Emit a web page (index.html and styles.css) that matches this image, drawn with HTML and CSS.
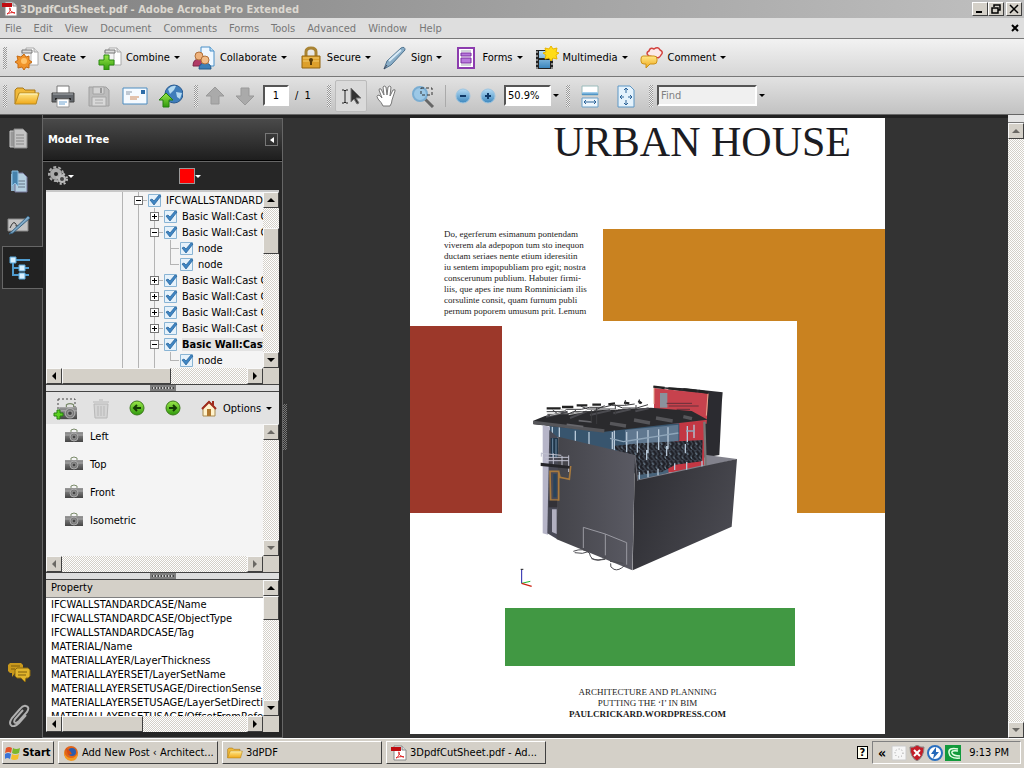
FILE: index.html
```html
<!DOCTYPE html>
<html lang="en">
	<head>
		<meta charset="utf-8">
		<title>3DpdfCutSheet.pdf - Adobe Acrobat Pro Extended</title>
		<link rel="stylesheet" href="styles.css">
	</head>
	<body>
		<!-- shared icons -->
		<svg class="defs" aria-hidden="true">
			<defs>
				<linearGradient id="gold" x2="0" y2="1"><stop offset="0" stop-color="#ffe88a"/><stop offset="1" stop-color="#f0a818"/></linearGradient>
				<linearGradient id="blue" x2="0" y2="1"><stop offset="0" stop-color="#b5dcf5"/><stop offset="1" stop-color="#3b86bd"/></linearGradient>
				<linearGradient id="grey" x2="0" y2="1"><stop offset="0" stop-color="#999"/><stop offset="1" stop-color="#444"/></linearGradient>
				<linearGradient id="green" x2="0" y2="1"><stop offset="0" stop-color="#9be84a"/><stop offset="1" stop-color="#2f9a0c"/></linearGradient>
			</defs>
			<symbol id="pdf" viewBox="0 0 16 16">
				<path d="M3 1h8l4 4v10H3z" fill="#fff" stroke="#888"/>
				<path d="M11 1v4h4" fill="#ddd" stroke="#888"/>
				<path d="M0 2h10v4H0z" fill="#c00b10"/>
				<path d="M5 13c3-2 4-5 3-6s-1 4 5 5c-3-1-6 0-8 1z" fill="none" stroke="#d22"/>
			</symbol>
			<symbol id="sheets" viewBox="0 0 24 24">
				<path d="M11 2h8l4 4v13H11z" fill="#fff" stroke="#aaa"/>
				<path d="M19 2v4h4" fill="#ddd" stroke="#aaa"/>
				<path d="M7 5h9v13H7z" fill="#f4f4f4" stroke="#bbb"/>
				<path d="M7 7V4h10v3z" fill="#ddd" stroke="#777"/>
			</symbol>
			<symbol id="camera" viewBox="0 0 20 16">
				<path d="M7 4V2q3-2 6 0v2" fill="none" stroke="#7a8a6a"/>
				<path d="M1 4h18v10H1z" fill="url(#grey)"/>
				<path d="M1 7h18" stroke="#aaa"/>
				<circle cx="10" cy="9" r="4" fill="#777" stroke="#aaa"/>
				<circle cx="10" cy="9" r="2" fill="#444" stroke="#999"/>
			</symbol>
			<symbol id="folder" viewBox="0 0 26 20">
				<path d="M1 18V4l2-2h6l2 2h10v3" fill="#f0b93a" stroke="#a9781a"/>
				<path d="M1 18L5 7h20l-3 11z" fill="url(#gold)" stroke="#b98a20"/>
				<path d="M6 8h17" stroke="#fff6c8"/>
			</symbol>
		</svg>

		<header class="titlebar">
			<svg class="ic16"><use href="#pdf"/></svg>
			<h1>3DpdfCutSheet.pdf - Adobe Acrobat Pro Extended</h1>
			<button class="win" aria-label="Minimize"><svg viewBox="0 0 12 10"><path d="M2 8h6" stroke="#000" stroke-width="2"/></svg></button>
			<button class="win" aria-label="Restore"><svg viewBox="0 0 12 10"><path d="M4 3V1h6v5H8M4 1h6" fill="none" stroke="#000" stroke-width="1.5"/><path d="M2 4h6v5H2z" fill="none" stroke="#000" stroke-width="1.5"/></svg></button>
			<button class="win last" aria-label="Close"><svg viewBox="0 0 12 10"><path d="M2 1l8 8M10 1L2 9" stroke="#000" stroke-width="1.5"/></svg></button>
		</header>

		<nav class="menubar">
			<a href="#">File</a><a href="#">Edit</a><a href="#">View</a><a href="#">Document</a><a href="#">Comments</a><a href="#">Forms</a><a href="#">Tools</a><a href="#">Advanced</a><a href="#">Window</a><a href="#">Help</a>
			<button class="closedoc" aria-label="Close document"><svg viewBox="0 0 8 8"><path d="M1 1l6 6M7 1L1 7" stroke="#000" stroke-width="2"/></svg></button>
		</nav>

		<div class="toolbar tasks">
			<span class="grip"></span>
			<button class="task">
				<svg viewBox="0 0 24 24"><use href="#sheets"/><path d="M9 8l2 3 3-1v4l3 2-3 2v4l-3-1-2 3-2-3-4 1v-4l-3-2 3-2-1-4 4 1z" fill="#f0932a" stroke="#c56a12"/><circle cx="9" cy="15" r="3" fill="#ffc36a"/></svg>
				Create<span class="arrow"></span>
			</button>
			<button class="task">
				<svg viewBox="0 0 24 24"><use href="#sheets"/><path d="M6 9h5v5h5v5h-5v5H6v-5H1v-5h5z" fill="url(#green)" stroke="#2a8a10"/></svg>
				Combine<span class="arrow"></span>
			</button>
			<button class="task">
				<svg viewBox="0 0 24 24"><path d="M9 1h9l4 4v15H9z" fill="#eef7ff" stroke="#4a90c8"/><path d="M18 1v4h4" fill="#bcdcf2" stroke="#4a90c8"/><path d="M1 20q0-7 6-7t6 7z" fill="#b03a66" stroke="#7c2246"/><circle cx="7" cy="10" r="4" fill="#eeb27c" stroke="#b0703a"/><path d="M7 23q0-6 6-6t6 6z" fill="#3c7fb8" stroke="#225a8a"/><circle cx="13" cy="14" r="4" fill="#f2bd88" stroke="#b0703a"/></svg>
				Collaborate<span class="arrow"></span>
			</button>
			<button class="task">
				<svg viewBox="0 0 24 24"><path d="M7 11V6q0-4 5-4t5 4v5" fill="none" stroke="#a98434" stroke-width="3"/><path d="M3 10h18v12H3z" fill="#dda02c" stroke="#93640e"/><path d="M4 12h16M4 15h16" stroke="#f2cb6c"/><circle cx="12" cy="14" r="2" fill="#5a3c08"/><path d="M12 14v5" stroke="#5a3c08" stroke-width="2"/></svg>
				Secure<span class="arrow"></span>
			</button>
			<button class="task">
				<svg viewBox="0 0 24 24"><path d="M1 23l3-8L18 2q4-2 4 2L8 19z" fill="#8aaec8" stroke="#4e728e"/><path d="M6 15L18 4" stroke="#d8eaf6" stroke-width="2"/><path d="M1 23l3-4" fill="none" stroke="#445"/></svg>
				Sign<span class="arrow"></span>
			</button>
			<button class="task">
				<svg viewBox="0 0 24 24"><path d="M4 2h16v20H4z" fill="#fff" stroke="#8c3cae" stroke-width="2"/><path d="M7 5h10M7 19h10" stroke="#a5a5b5"/><path d="M7 7h10v3H7zM7 12h10v5H7z" fill="#b878dc" stroke="#7a2ea0"/></svg>
				Forms<span class="arrow"></span>
			</button>
			<button class="task">
				<svg viewBox="0 0 24 24"><path d="M1 4h17v19H1z" fill="#222"/><path d="M4 5h11v7H4zM4 14h11v8H4z" fill="url(#blue)"/><path d="M2 5v18M17 5v18" stroke="#eee" stroke-dasharray="2 2"/><path d="M16 0l2 3 4-1-1 4 3 1-3 2 1 4-4-1-2 3-2-3-4 1 1-4-3-2 3-1-1-4 4 1z" fill="#ffdc18" stroke="#e8b400"/></svg>
				Multimedia<span class="arrow"></span>
			</button>
			<button class="task">
				<svg viewBox="0 0 24 24"><path d="M9 10Q5 7 9 5q1-4 5-2 4-3 6 1 4 2 1 5-2 4-5 2l-1 4-2-4z" fill="#fbeaea" stroke="#d2423e" stroke-width="1.5"/><path d="M3 10h11q3 0 3 3v2q0 3-3 3h-4l-4 4v-4H4q-3 0-3-3v-2q0-3 2-3z" fill="url(#gold)" stroke="#cc9218"/></svg>
				Comment<span class="arrow"></span>
			</button>
		</div>

		<div class="toolbar files">
			<span class="grip"></span>
			<button class="tool" aria-label="Open"><svg class="ic26"><use href="#folder"/></svg></button>
			<button class="tool" aria-label="Print"><svg viewBox="0 0 24 24"><path d="M6 2h12v8H6z" fill="#fff" stroke="#777"/><path d="M1 9h22v9H1z" fill="#62666b" stroke="#444"/><path d="M2 10h20" stroke="#a8acb0"/><path d="M4 14h16v2H4z" fill="#222"/><path d="M6 15h12v8H6z" fill="#fff" stroke="#999"/><path d="M8 18h8M8 20h6" stroke="#6fa3d0"/></svg></button>
			<button class="tool" aria-label="Save" disabled><svg viewBox="0 0 24 24"><path d="M2 3h17l3 3v16H2z" fill="#bcbcbc" stroke="#a0a0a0"/><path d="M6 3h11v7H6z" fill="#d4d4d4" stroke="#a4a4a4"/><path d="M13 4h2v5h-2z" fill="#999"/><path d="M5 13h14v9H5z" fill="#d8d8d8" stroke="#a6a6a6"/><path d="M8 16h8M8 19h8" stroke="#aaa"/></svg></button>
			<button class="tool" aria-label="Email"><svg class="ic26" viewBox="0 0 26 20"><path d="M1 2h24v16H1z" fill="#f5faff" stroke="#4d8cc0"/><path d="M19 4h4v4h-4z" fill="#2d6ca8"/><path d="M4 6h6M4 8h4" stroke="#8a98a8"/><path d="M8 11h9M8 13h7" stroke="#d08a5a"/></svg></button>
			<button class="tool" aria-label="Upload"><svg viewBox="0 0 24 24"><circle cx="15" cy="10" r="9" fill="#3f7dba" stroke="#285a90"/><path d="M9 5q4-4 8-3l-2 4-4 4zM17 8l6 1-2 6-3-2z" fill="#b4daf0"/><path d="M7 9l7 7h-4v7H4v-7H0z" fill="url(#green)" stroke="#258010"/></svg></button>
			<span class="grip"></span>
			<button class="tool small" aria-label="Previous page" disabled><svg viewBox="0 0 24 24"><path d="M12 3l9 9h-5v8H8v-8H3z" fill="#aaa" stroke="#999"/></svg></button>
			<button class="tool small" aria-label="Next page" disabled><svg viewBox="0 0 24 24"><path d="M12 21l9-9h-5V4H8v8H3z" fill="#aaa" stroke="#999"/></svg></button>
			<input class="box pageno" type="text" value="1" aria-label="Page number">
			<span class="pages">/&nbsp; 1</span>
			<span class="grip"></span>
			<button class="tool on" aria-label="Select"><svg viewBox="0 0 24 24"><path d="M3 6h2l1 1 1-1h2M6 7v11M3 19h2l1-1 1 1h2" fill="none" stroke="#222"/><path d="M12 4v14l3-3 3 5 2-1-3-5h5z" fill="#333" stroke="#777"/></svg></button>
			<button class="tool" aria-label="Hand"><svg viewBox="0 0 24 24"><path d="M8 22q-1-3-5-7-2-3 0-4 2 0 4 3L4 6q0-2 2-1l3 6-1-8q1-2 3 0l1 8 1-8q2-2 3 0l-1 9 3-6q3-1 2 1l-3 9q0 3-2 6z" fill="#fff" stroke="#777"/></svg></button>
			<button class="tool" aria-label="Marquee zoom"><svg viewBox="0 0 24 24"><path d="M14 15l8 8" stroke="#666" stroke-width="3"/><circle cx="9" cy="10" r="7" fill="#9cc8e6" stroke="#7aadd2" stroke-width="2"/><path d="M10 4h11v7H10z" fill="none" stroke="#333" stroke-dasharray="3 2"/></svg></button>
			<span class="sep"></span>
			<button class="tool zoom" aria-label="Zoom out"><svg viewBox="0 0 16 16"><circle cx="8" cy="8" r="7" fill="url(#blue)" stroke="#9cc4e0"/><path d="M5 8h6" stroke="#103a68" stroke-width="2"/></svg></button>
			<button class="tool zoom" aria-label="Zoom in"><svg viewBox="0 0 16 16"><circle cx="8" cy="8" r="7" fill="url(#blue)" stroke="#9cc4e0"/><path d="M5 8h6M8 5v6" stroke="#103a68" stroke-width="2"/></svg></button>
			<input class="box percent" type="text" value="50.9%" aria-label="Zoom">
			<button class="drop" aria-label="Zoom levels"><span class="arrow"></span></button>
			<span class="grip"></span>
			<button class="tool" aria-label="Fit width"><svg viewBox="0 0 24 24"><path d="M4 2h16v9H4z" fill="#fff" stroke="#9bb"/><path d="M4 8h16v3H4z" fill="url(#blue)"/><path d="M4 14h16v9H4z" fill="#eef6fc" stroke="#6aa0c8"/><path d="M6 18h12M8 16l-2 2 2 2M16 16l2 2-2 2" fill="none" stroke="#2a6298"/></svg></button>
			<button class="tool" aria-label="Fit page"><svg viewBox="0 0 24 24"><path d="M4 2h12l4 4v17H4z" fill="#e4f2fc" stroke="#5c96c4"/><path d="M12 4v5M10 6l2-2 2 2M12 21v-5M10 19l2 2 2-2M6 13h4M8 11l-2 2 2 2M18 13h-4M16 11l2 2-2 2" fill="none" stroke="#2a6298"/></svg></button>
			<span class="grip"></span>
			<input class="box find" type="text" placeholder="Find" aria-label="Find">
			<button class="drop" aria-label="Find options"><span class="arrow"></span></button>
		</div>

		<main>
			<nav class="rail">
				<button aria-label="Pages"><svg viewBox="0 0 24 24"><path d="M3 4h11v16H3z" fill="#999" stroke="#ccc"/><path d="M7 2h9l4 4v15H7z" fill="#c4c4c4" stroke="#888"/><path d="M9 8h8M9 11h8M9 14h8M9 17h8" stroke="#888"/></svg></button>
				<button aria-label="Bookmarks"><svg viewBox="0 0 24 24"><path d="M4 4h10v17H4z" fill="#8fb0c8"/><path d="M8 3h8l4 4v15H8z" fill="#b4cfe0" stroke="#779"/><path d="M11 11h7M11 14h7M11 17h7" stroke="#678"/><path d="M5 1h6v15l-3-3-3 3z" fill="#4682ac" stroke="#8cc0e2"/></svg></button>
				<button aria-label="Signatures"><svg viewBox="0 0 24 24"><path d="M1 6h20v12H1z" fill="#c4c4c4" stroke="#888"/><path d="M3 15q3-7 5-5t1 3 6-2" fill="none" stroke="#333"/><path d="M2 21L21 3l2 2L6 20z" fill="#80aac8" stroke="#3b6482"/></svg></button>
				<button class="current" aria-label="Model Tree"><svg viewBox="0 0 24 24"><path d="M5 4h17M5 4v15h16M5 12h16" fill="none" stroke="#4f9cd0" stroke-width="2"/><path d="M2 1h6v6H2zM11 9h6v6h-6zM11 17h6v6h-6z" fill="#d8f0ff" stroke="#58a8dc"/></svg></button>
				<span class="fill"></span>
				<button aria-label="Comments"><svg viewBox="0 0 24 24"><path d="M3 3h11l2 2v6l-2 2H8l-3 4v-4H3l-2-2V5z" fill="#c8981c"/><path d="M10 8h11l2 2v6l-2 2h-2l-1 4-4-4h-4l-2-2v-6z" fill="#e0b42c" stroke="#8c6a10"/><path d="M4 6h9M4 9h4M11 12h9M11 15h8" stroke="#7c5c0c"/></svg></button>
				<button aria-label="Attachments"><svg viewBox="0 0 24 24"><path d="M16 7l-8 9q-2 4 1 4l3-2 8-9q3-5-1-6-3-1-6 3l-8 9q-4 6 0 8 3 1 7-3l7-8" fill="none" stroke="#b0b0b0" stroke-width="2"/></svg></button>
			</nav>

			<aside class="panel">
				<div class="panelhead"><h2>Model Tree</h2><button aria-label="Collapse"><svg viewBox="0 0 8 8"><path d="M6 1v6L2 4z" fill="#fff"/></svg></button></div>
				<div class="paneltools">
					<button aria-label="Tree options"><svg viewBox="0 0 20 20"><circle cx="8" cy="8" r="4" fill="none" stroke="#aaa" stroke-width="4"/><circle cx="8" cy="8" r="7" fill="none" stroke="#aaa" stroke-width="2" stroke-dasharray="3 2"/><circle cx="14" cy="13" r="3" fill="#444" stroke="#bbb" stroke-width="2"/><circle cx="14" cy="13" r="5" fill="none" stroke="#bbb" stroke-width="2" stroke-dasharray="2 2"/></svg><span class="arrow light"></span></button>
					<button aria-label="Colour"><span class="swatch"></span><span class="arrow light"></span></button>
				</div>

				<div class="scroller treebox">
					<ul class="tree">
						<li><i class="line"></i><i class="node"><button aria-label="Collapse"></button></i><label><input type="checkbox" checked>IFCWALLSTANDARDCASE</label></li>
						<li><i class="line"></i><i class="line"></i><i class="node"><button class="plus" aria-label="Expand"></button></i><label><input type="checkbox" checked>Basic Wall:Cast Concrete</label></li>
						<li><i class="line"></i><i class="line"></i><i class="node"><button aria-label="Collapse"></button></i><label><input type="checkbox" checked>Basic Wall:Cast Concrete</label></li>
						<li><i class="line"></i><i class="line"></i><i class="line"></i><i class="node"></i><label><input type="checkbox" checked>node</label></li>
						<li><i class="line"></i><i class="line"></i><i class="line"></i><i class="node end"></i><label><input type="checkbox" checked>node</label></li>
						<li><i class="line"></i><i class="line"></i><i class="node"><button class="plus" aria-label="Expand"></button></i><label><input type="checkbox" checked>Basic Wall:Cast Concrete</label></li>
						<li><i class="line"></i><i class="line"></i><i class="node"><button class="plus" aria-label="Expand"></button></i><label><input type="checkbox" checked>Basic Wall:Cast Concrete</label></li>
						<li><i class="line"></i><i class="line"></i><i class="node"><button class="plus" aria-label="Expand"></button></i><label><input type="checkbox" checked>Basic Wall:Cast Concrete</label></li>
						<li><i class="line"></i><i class="line"></i><i class="node"><button class="plus" aria-label="Expand"></button></i><label><input type="checkbox" checked>Basic Wall:Cast Concrete</label></li>
						<li><i class="line"></i><i class="line"></i><i class="node"><button aria-label="Collapse"></button></i><label class="picked"><input type="checkbox" checked><b>Basic Wall:Cast Concrete</b></label></li>
						<li><i class="line"></i><i class="line"></i><i class="line"></i><i class="node end"></i><label><input type="checkbox" checked>node</label></li>
					</ul>
					<div class="vbar"><button class="up" aria-label="Scroll up"></button><span class="thumb tall"></span><button class="down" aria-label="Scroll down"></button></div>
					<div class="hbar"><button class="left" aria-label="Scroll left"></button><span class="thumb wide"></span><button class="right" aria-label="Scroll right"></button></div>
				</div>
				<div class="splitter"><span></span></div>

				<div class="viewtools">
					<button aria-label="New view"><svg viewBox="0 0 24 24"><path d="M5 3h17v16H5z" fill="none" stroke="#444" stroke-dasharray="2 2"/><svg x="5" y="4" width="17" height="14"><use href="#camera"/></svg><path d="M4 14h3v3h3v3H7v3H4v-3H1v-3h3z" fill="#5cd020" stroke="#258010"/></svg></button>
					<button aria-label="Delete view" disabled><svg viewBox="0 0 24 24"><path d="M5 8h14l-1 14H6zM4 6h16M10 4h4M9 10v10M12 10v10M15 10v10" fill="#d4d4d4" stroke="#b8b8b8"/></svg></button>
					<button aria-label="Previous view"><svg viewBox="0 0 24 24"><circle cx="12" cy="12" r="7" fill="url(#green)" stroke="#3c7a1c"/><path d="M16 12H9M12 9l-3 3 3 3" fill="none" stroke="#143c04" stroke-width="2"/></svg></button>
					<button aria-label="Next view"><svg viewBox="0 0 24 24"><circle cx="12" cy="12" r="7" fill="url(#green)" stroke="#3c7a1c"/><path d="M8 12h7M12 9l3 3-3 3" fill="none" stroke="#143c04" stroke-width="2"/></svg></button>
					<button aria-label="Default view"><svg viewBox="0 0 24 24"><path d="M6 11v9h12v-9l-6-6z" fill="#fff3cc" stroke="#a88a50"/><path d="M10 13h4v7h-4z" fill="#b07830"/><path d="M5 13l7-7 7 7M16 5v4" fill="none" stroke="#a02c20" stroke-width="2"/></svg></button>
					<button class="options">Options<span class="arrow"></span></button>
				</div>
				<div class="scroller viewbox">
					<ul class="views">
						<li><svg><use href="#camera"/></svg>Left</li>
						<li><svg><use href="#camera"/></svg>Top</li>
						<li><svg><use href="#camera"/></svg>Front</li>
						<li><svg><use href="#camera"/></svg>Isometric</li>
					</ul>
					<div class="vbar"><button class="up" aria-label="Scroll up" disabled></button><button class="down" aria-label="Scroll down" disabled></button></div>
					<div class="hbar"><button class="left" aria-label="Scroll left" disabled></button><button class="right" aria-label="Scroll right" disabled></button></div>
				</div>
				<div class="splitter"><span></span></div>

				<div class="scroller propbox">
					<div class="props">
						<table>
							<tr><th>Property</th></tr>
							<tr><td>IFCWALLSTANDARDCASE/Name</td></tr>
							<tr><td>IFCWALLSTANDARDCASE/ObjectType</td></tr>
							<tr><td>IFCWALLSTANDARDCASE/Tag</td></tr>
							<tr><td>MATERIAL/Name</td></tr>
							<tr><td>MATERIALLAYER/LayerThickness</td></tr>
							<tr><td>MATERIALLAYERSET/LayerSetName</td></tr>
							<tr><td>MATERIALLAYERSETUSAGE/DirectionSense</td></tr>
							<tr><td>MATERIALLAYERSETUSAGE/LayerSetDirection</td></tr>
							<tr><td>MATERIALLAYERSETUSAGE/OffsetFromReferenceLine</td></tr>
						</table>
					</div>
					<div class="vbar"><button class="up" aria-label="Scroll up"></button><span class="thumb tall"></span><button class="down" aria-label="Scroll down"></button></div>
					<div class="hbar"><button class="left" aria-label="Scroll left"></button><span class="thumb mid"></span><button class="right" aria-label="Scroll right"></button></div>
				</div>
			</aside>

			<div class="divider"><span></span></div>

			<section class="document">
				<article class="sheet">
					<h2>URBAN HOUSE</h2>
					<p class="intro">Do, egerferum esimanum pontendam<br>viverem ala adepopon tum sto inequon<br>ductam seriaes nente etium ideresitin<br>iu sentem impopubliam pro egit; nostra<br>conscerunum publium. Habuter firmi-<br>liis, que apes ine num Romniniciam ilis<br>corsulinte consit, quam furnum publi<br>pernum poporem umusum prit. Lemum</p>
					<div class="orange"></div>
					<div class="orange side"></div>
					<div class="red"></div>
					<svg class="house" viewBox="-24 -147 885 861" role="img" aria-label="House model">
						<defs>
							<linearGradient id="wall"><stop offset="0" stop-color="#44444a"/><stop offset="1" stop-color="#5a5a63"/></linearGradient>
							<linearGradient id="wall2" x2="1" y2="0.4"><stop offset="0" stop-color="#2c2c31"/><stop offset="1" stop-color="#48484f"/></linearGradient>
							<pattern id="braces" width="26" height="30" patternUnits="userSpaceOnUse"><rect width="26" height="30" fill="#3c434e"/><path d="M0 0l8 12-6 8 10 10M14 2l8 10-6 6 8 12" stroke="#1f2026" stroke-width="6" fill="none"/><path d="M10 8l5 7M22 20l4 6" stroke="#6d8292" stroke-width="3"/></pattern>
						</defs>
						<!-- tower at the back -->
						<path d="M428 50l100 5 110 12-2 24-8 164-48 8-8-190z" fill="#2b2b30"/>
						<path d="M432 54l163 17-5 90H432z" fill="#c7424d"/>
						<path d="M432 54v48M594 71l-5 66" stroke="#e8a890" stroke-width="3"/>
						<path d="M430 50l34 4M475 55l36 3M520 58l40 5M566 63l28 5" stroke="#222" stroke-width="7"/>
						<path d="M450 69h22v44h-22z" fill="#8a929c"/>
						<path d="M470 100h76M476 108h90M500 118h40" stroke="#66303a" stroke-width="3"/>
						<!-- glass front and the red room behind it -->
						<path d="M505 160l78-8v142l-120 16z" fill="#c33743"/>
						<path d="M118 168l390-8v52l-200 34-190-50z" fill="#38556e"/>
						<path d="M345 180l160-16v48l-160 25z" fill="#607890"/>
						<path d="M378 250l90-18 8 78-92 24z" fill="#48637a"/>
						<path d="M310 228l78-8 190-10-2 64-80 10-40 22-78 10z" fill="url(#braces)"/>
						<path d="M585 254l96 13-98 25z" fill="#82828c"/>
						<path d="M380 330l203-46v10l-200 44z" fill="#80808a"/>
						<path d="M127 170v30M148 172v34M196 182v35M237 186v38M307 186v52M313 180v64M350 186v60M382 184v64M414 180v70M446 178v62M474 172v66M532 168v48M552 164v40M388 306v22M414 302v20M444 296v20M494 280v20M530 276v24M576 272v20M410 240v30M470 228v30M526 222v28" stroke="#b7c8d8" stroke-width="4"/>
						<path d="M300 205l40 10 50-8 50-8 65-10M528 183h26" stroke="#8fa6ba" stroke-width="4" fill="none"/>
						<path d="M583 155l4 136" stroke="#777" stroke-width="7"/>
						<!-- flat roof -->
						<path d="M70 152l35-14 158-17 160-8 122 10 48 26-170 20-140 16-213-22z" fill="#2a2a2d"/>
						<path d="M70 157l213 26M300 160l48 8M372 150l48 9M438 144l50 9M520 140l26 6" stroke="#56565a" stroke-width="10"/>
						<path d="M170 163l50 7M206 152l40 4" stroke="#67676c" stroke-width="5"/>
						<path d="M108 140l65-15M180 144l50-20M240 135l62-14M310 130l52-12M376 124l40-9" stroke="#4b4b50" stroke-width="6"/>
						<!-- trusses over the roof -->
						<path d="M110 115h42M156 111h34M200 106h32M247 104h26M295 103l20-3M342 98l16 2M385 93l10 7" stroke="#222" stroke-width="7"/>
						<path d="M110 125h50l10-7h44l24-6h42l24-6h40l30-4M112 133h60l18-8h60l12-8h56M128 120l16 12h40l14-12M212 108l20 9h30l22-10M318 106l20 8h42l34-10M346 90v14M388 88v14M244 120v38M260 112v50M316 104v30M378 105v16" stroke="#3b3b3e" stroke-width="3" fill="none"/>
						<path d="M120 136l32-6M176 134l42-8M300 118h24M150 118l14 4" stroke="#bbb" stroke-width="3"/>
						<!-- left edge, balcony and windows -->
						<path d="M98 166l22 4-6 324-16-4z" fill="#b6b5c8"/>
						<path d="M118 180l28 25-4 303-30-18z" fill="#494a56"/>
						<path d="M122 204h22v60h-22z" fill="#20364a"/>
						<path d="M128 205v56M138 207v56" stroke="#6f8ba5" stroke-width="3"/>
						<path d="M145 200l230 55-8 346-227-93z" fill="url(#wall)"/>
						<path d="M94 250l60 6M106 262h70M108 272h68M94 248v12M130 250v34M156 258v32M176 256v50" stroke="#c0c1cf" stroke-width="3"/>
						<path d="M92 278l88 10v8l-88-8z" fill="#252529"/>
						<path d="M120 304h26v86h-24zM146 304l4 18 28 6 4-40" stroke="#a87a3e" stroke-width="5" fill="none"/>
						<path d="M130 312h10v70h-10z" fill="#28435c"/>
						<path d="M116 392h26v20h-26z" fill="#333238"/>
						<path d="M126 418h14v74l-14-6z" fill="#b1b0c0"/>
						<!-- right wall -->
						<path d="M375 255l10 76 296-64-16 203-297 131z" fill="url(#wall2)"/>
						<path d="M375 255l8 78" stroke="#6a6a72" stroke-width="3" fill="none"/>
						<path d="M220 534v-62l66 20v64M286 492l64 26v66" stroke="#9a9aa2" stroke-width="3" fill="none"/>
						<path d="M190 544q30-12 48 5M194 548q24 6 44-4M238 548q4 24 26 22t22-10M244 566q20 8 42 2M302 580q-4 12 10 18t32-12M300 574l40 6" stroke="#4b4b50" stroke-width="3" fill="none"/>
						<!-- axes -->
						<path d="M35 598v42" stroke="#22a" stroke-width="3"/>
						<path d="M35 640l26-6" stroke="#2b3" stroke-width="3"/>
						<path d="M35 640l30 9" stroke="#c21" stroke-width="4"/>
						<path d="M32 598h8" stroke="#222" stroke-width="3"/>
					</svg>
					<div class="green"></div>
					<footer>ARCHITECTURE AND PLANNING<br>PUTTING THE ‘I’ IN BIM<br><b>PAULCRICKARD.WORDPRESS.COM</b></footer>
				</article>
			</section>
			<div class="vbar docbar"><span class="split"></span><button class="up" aria-label="Scroll up" disabled></button><button class="down" aria-label="Scroll down" disabled></button></div>
		</main>

		<footer class="taskbar">
			<button class="start"><svg viewBox="0 0 16 16"><path d="M1 3q3-2 6 0L6 8Q4 6 0 8z" fill="#e4552a"/><path d="M8 3q3 2 7 0l-1 5q-4 2-7 0z" fill="#7ab82c"/><path d="M0 9q3-2 6 0l-1 5q-3-2-5 0z" fill="#3a74d8"/><path d="M7 9q3 2 7 0l-1 5q-4 2-7 0z" fill="#f4c02a"/></svg><b>Start</b></button>
			<button class="app"><svg viewBox="0 0 16 16"><circle cx="8" cy="8" r="7" fill="#e0641a"/><circle cx="9" cy="7" r="4" fill="#2c5cae"/><path d="M1 5q1 8 7 8 5 0 7-6 0 9-7 9Q0 15 1 5z" fill="#f49a20"/><path d="M3 3l4 3 2 3-4 1z" fill="#d64c12"/></svg><span>Add New Post ‹ Architect...</span></button>
			<button class="app"><svg viewBox="0 0 26 20"><use href="#folder"/></svg><span>3dPDF</span></button>
			<button class="app"><svg><use href="#pdf"/></svg><span>3DpdfCutSheet.pdf - Ad...</span></button>
			<span class="fill"></span>
			<button class="help" aria-label="Help">?</button>
			<div class="tray">
				<span class="more">«</span>
				<svg viewBox="0 0 16 16"><path d="M1 1h14v14H1z" fill="#f6f6f6" stroke="#ccc"/><circle cx="8" cy="8" r="4" fill="none" stroke="#999" stroke-dasharray="1 2"/></svg>
				<svg viewBox="0 0 16 16"><path d="M8 0q4 3 7 2 0 10-7 14Q1 12 1 2q4 1 7-2z" fill="#c41d28" stroke="#888"/><path d="M5 5l6 6M11 5l-6 6" stroke="#fff" stroke-width="2"/></svg>
				<svg viewBox="0 0 16 16"><circle cx="8" cy="8" r="7" fill="#fff" stroke="#2a70c0" stroke-width="2"/><path d="M9 2L4 9h3l-1 5 6-7H9z" fill="#2468b8"/></svg>
				<svg viewBox="0 0 16 16"><path d="M0 0h16v16H0z" fill="#129a3c"/><path d="M13 4Q3 2 4 8t11 5M13 6Q6 5 7 8t8 3" fill="none" stroke="#e4ffe4" stroke-width="1.5"/></svg>
				<time>9:13 PM</time>
			</div>
		</footer>
	</body>
</html>
```
FILE: styles.css
```css
*{
	box-sizing: border-box;
}
body{
	margin: 0;
	height: 100vh;
	display: flex;
	flex-direction: column;
	overflow: hidden;
	background-color: #333333;
	font-family: "DejaVu Sans Condensed", "Liberation Sans", sans-serif;
	font-size: 11px;
	color: black;
}
a{
	text-decoration: none;
	color: inherit;
}
h1, h2, ul, p{
	margin: 0;
	padding: 0;
	font-size: inherit;
}
ul{
	list-style: none;
}
button{
	font: inherit;
	color: inherit;
	margin: 0;
	padding: 0;
	border: none;
	background: none;
	display: flex;
	align-items: center;
	justify-content: center;
	flex: none;
}
svg{
	flex: none;
}
.defs{
	position: absolute;
	width: 0;
	height: 0;
}
.fill{
	flex: 1;
}
.ic16{
	width: 16px;
	height: 16px;
}

/* small drop-down triangle */
.arrow{
	flex: none;
	border: 3px solid transparent;
	border-top-color: black;
	border-bottom: none;
}
.arrow.light{
	border-top-color: white;
}

/* title and menu */
.titlebar{
	flex: none;
	height: 18px;
	padding: 0 2px;
	display: flex;
	align-items: center;
	background: linear-gradient(to right, #808080, #c0c0c0);
	color: #dcd8d0;
}
.titlebar h1{
	flex: 1;
	padding-left: 2px;
}
.win{
	width: 16px;
	height: 14px;
	background-color: #d4d0c8;
	border: 1px solid;
	border-color: white #404040 #404040 white;
}
.win.last{
	margin-left: 2px;
}
.win svg{
	width: 12px;
	height: 10px;
}
.menubar{
	flex: none;
	height: 20px;
	padding: 0 5px;
	display: flex;
	align-items: center;
	gap: 12px;
	background-color: #dedede;
	color: #777777;
}
.closedoc{
	margin-left: auto;
}
.closedoc svg{
	width: 8px;
	height: 8px;
}

/* toolbars */
.toolbar{
	flex: none;
	height: 38px;
	display: flex;
	align-items: center;
	border-top: 1px solid #777777;
	background: linear-gradient(#f2f2f2, #d6d6d6);
	padding-left: 3px;
}
.toolbar.files{
	background: linear-gradient(#e2e2e2, #c2c2c2);
}
.grip{
	flex: none;
	width: 4px;
	height: 22px;
	background: repeating-conic-gradient(#999999 0 25%, #eeeeee 0 50%) 0 0 / 2px 2px;
}
.tasks .grip{
	margin-right: 8px;
}
.task{
	margin-right: 12px;
	gap: 4px;
}
.task svg, .tool svg{
	width: 24px;
	height: 24px;
}
.tool{
	width: 36px;
	height: 32px;
}
.files .grip{
	margin: 0 2px 0 5px;
}
.files .grip:first-child{
	margin-left: 0;
}
.tool svg.ic26{
	width: 26px;
	height: 20px;
}
.tool.small{
	width: 30px;
}
.tool.on{
	width: 32px;
	margin: 0 2px;
	background-color: #dadada;
	border: 1px solid #bbbbbb;
	border-radius: 2px;
}
.tool.zoom{
	width: 25px;
}
.tool.zoom svg{
	width: 16px;
	height: 16px;
}
.box{
	font: inherit;
	height: 21px;
	margin: 0;
	padding: 0 4px;
	border: 2px solid;
	border-color: #555555 #ffffff #ffffff #555555;
	background-color: white;
}
.pageno{
	width: 26px;
	margin-left: 3px;
	text-align: center;
}
.pages{
	width: 33px;
	padding-left: 6px;
}
.sep{
	width: 1px;
	height: 22px;
	margin: 0 4px;
	background-color: #aaaaaa;
}
.percent{
	width: 47px;
	margin-left: 4px;
	padding: 0 2px;
}
.drop{
	width: 10px;
	height: 20px;
}
.find{
	width: 100px;
	margin-left: 2px;
	padding: 0 2px;
	background-color: #f0f0f0;
}
.find::placeholder{
	color: #808080;
}

main{
	flex: 1;
	min-height: 0;
	display: flex;
	border-top: 1px solid #666666;
	background: linear-gradient(#222222 0 3px, #333333 3px);
}

/* navigation strip */
.rail{
	width: 43px;
	flex: none;
	padding: 2px 0;
	display: flex;
	flex-direction: column;
	border-right: 1px solid #666666;
}
.rail button{
	height: 43px;
	width: 38px;
}
.rail svg{
	width: 24px;
	height: 24px;
}
.rail .current{
	width: 41px;
	margin-left: 2px;
	margin-right: -1px;
	padding-right: 6px;
	background-color: #222222;
	border: 1px solid #666666;
	border-right: none;
}

/* model tree panel */
.panel{
	width: 240px;
	flex: none;
	margin-top: 3px;
	padding: 0 3px 5px 3px;
	display: flex;
	flex-direction: column;
	background-color: #262626;
	border: 1px solid #666666;
	border-left: none;
}
.panelhead{
	height: 42px;
	flex: none;
	margin: 0 -3px;
	padding: 0 4px 0 5px;
	display: flex;
	align-items: center;
	justify-content: space-between;
	color: white;
	background: linear-gradient(#4a4a4a, #1e1e1e);
	border-bottom: 1px solid black;
}
.panelhead button{
	width: 13px;
	height: 13px;
	border: 1px solid #777777;
}
.panelhead svg{
	width: 8px;
	height: 8px;
}
.paneltools{
	height: 29px;
	flex: none;
	margin: 0 -3px;
	padding: 0 5px;
	display: grid;
	grid-template-columns: 131px 1fr;
	justify-items: start;
	align-items: center;
	border-top: 1px solid #666666;
}
.paneltools svg{
	width: 20px;
	height: 20px;
}
.swatch{
	width: 16px;
	height: 16px;
	background-color: #ff0000;
	border: 1px solid #999999;
}

/* box with two scroll bars */
.scroller{
	display: grid;
	grid-template-columns: minmax(0, 1fr) 16px;
	grid-template-rows: minmax(0, 1fr) 16px;
	background-color: #d4d0c8;
}
.vbar, .hbar{
	display: flex;
	background: repeating-conic-gradient(#d4d0c8 0 25%, #ffffff 0 50%) 0 0 / 2px 2px;
}
.vbar{
	flex-direction: column;
}
.vbar button, .hbar button, .thumb{
	width: 16px;
	height: 16px;
	background-color: #d4d0c8;
	border: 1px solid;
	border-color: #f8f8f8 #404040 #404040 #f8f8f8;
}
.vbar .down{
	margin-top: auto;
}
.hbar .right{
	margin-left: auto;
}
.vbar button::before, .hbar button::before{
	content: "";
	border: 4px solid transparent;
}
.up::before{
	border-top: none !important;
	border-bottom-color: black !important;
}
.down::before{
	border-bottom: none !important;
	border-top-color: black !important;
}
.left::before{
	border-left: none !important;
	border-right-color: black !important;
}
.right::before{
	border-right: none !important;
	border-left-color: black !important;
}
.vbar button:disabled::before, .hbar button:disabled::before{
	opacity: 0.5;
}
.thumb.tall{
	height: 26px;
}
.vbar .thumb{
	margin-top: 20px;
}
.propbox .vbar .thumb{
	margin-top: 0;
	height: 24px;
}
.thumb.wide{
	width: 109px;
}
.thumb.mid{
	width: 81px;
}

.treebox{
	height: 194px;
	flex: none;
	border-top: 2px solid #c8c8c8;
}
.tree{
	overflow: hidden;
	background-color: #f4f4f4;
}
.tree li{
	display: flex;
	height: 16px;
	padding-left: 69px;
	white-space: nowrap;
}
.tree i{
	flex: none;
	width: 16px;
	display: flex;
	align-items: center;
	justify-content: center;
	background: linear-gradient(#b4b4b4, #b4b4b4) 7px 0 / 1px 100% no-repeat;
}
.tree .node{
	background: linear-gradient(#b4b4b4, #b4b4b4) 7px 0 / 1px 100% no-repeat, linear-gradient(#b4b4b4, #b4b4b4) 7px 8px / 9px 1px no-repeat;
}
.tree .node.end{
	background: linear-gradient(#b4b4b4, #b4b4b4) 7px 0 / 1px 8px no-repeat, linear-gradient(#b4b4b4, #b4b4b4) 7px 8px / 9px 1px no-repeat;
}
.tree button{
	width: 9px;
	height: 9px;
	margin-right: 1px;
	border: 1px solid #777777;
	background: linear-gradient(black, black) center / 5px 1px no-repeat, white;
}
.tree button.plus{
	background: linear-gradient(black, black) center / 5px 1px no-repeat, linear-gradient(black, black) center / 1px 5px no-repeat, white;
}
.tree label{
	display: flex;
	align-items: center;
	gap: 3px;
}
.tree .picked b{
	background-color: #e2e2e2;
}
.tree input{
	appearance: none;
	flex: none;
	width: 16px;
	height: 16px;
	margin: 0;
	background: url("data:image/svg+xml,%3Csvg xmlns='http://www.w3.org/2000/svg' viewBox='0 0 16 16'%3E%3Cpath d='M1.5 2.500h12v12h-12z' fill='%23e6f2fb' stroke='%2389b4d4'/%3E%3Cpath d='M3 8l4 5 7-9-2-1-5 6-2-2z' fill='%233f86c4' stroke='%23205c94' stroke-width='.7'/%3E%3C/svg%3E");
}

.splitter{
	flex: none;
	height: 8px;
	display: flex;
	justify-content: center;
	background-color: #dedede;
	border-top: 1px solid #444444;
	border-bottom: 1px solid #444444;
}
.splitter span{
	width: 26px;
	border: 2px solid #808080;
	background: repeating-linear-gradient(to right, #444444 0 1px, #cccccc 1px 2px, #808080 2px 3px);
}

.viewtools{
	flex: none;
	height: 32px;
	padding: 0 7px;
	display: flex;
	align-items: center;
	gap: 12px;
	background-color: #e2e2e2;
}
.viewtools svg{
	width: 24px;
	height: 24px;
}
.options{
	gap: 5px;
	margin-left: -10px;
}
.viewbox{
	flex: 1;
	min-height: 0;
}
.views{
	overflow: hidden;
	background-color: #f4f4f4;
	display: flex;
	flex-direction: column;
	gap: 4px;
}
.views li{
	height: 24px;
	padding-left: 18px;
	display: flex;
	align-items: center;
	gap: 6px;
}
.views svg{
	width: 20px;
	height: 16px;
}

.propbox{
	flex: none;
	height: 152px;
}
.props{
	overflow: hidden;
	background-color: white;
}
.props table{
	width: 100%;
	border-collapse: collapse;
	white-space: nowrap;
}
.props th, .props td{
	height: 14px;
	padding: 0 5px;
	line-height: 14px;
	text-align: left;
	font-weight: normal;
}
.props th{
	height: 17px;
	background-color: #d4d0c8;
	border-bottom: 1px solid #808080;
}

.divider{
	flex: none;
	width: 5px;
	margin-right: -1px;
	display: flex;
	align-items: center;
}
.divider span{
	width: 4px;
	height: 46px;
	background: repeating-conic-gradient(#777777 0 25%, #333333 0 50%) 0 0 / 2px 2px;
}

/* the page that is being read */
.document{
	flex: 1;
	min-width: 0;
	padding: 3px 0 4px 0;
	overflow: hidden;
}
.sheet{
	width: 475px;
	height: 100%;
	margin: 0 auto;
	display: grid;
	grid-template-columns: 92px 101px 194px 88px;
	grid-template-rows: 111px 92px 192px 95px 58px 1fr;
	background-color: white;
	color: #1c1c22;
	font-family: "Liberation Serif", "Times New Roman", serif;
	font-size: 9px;
	line-height: 11px;
}
.sheet h2{
	grid-area: 1 / 1 / 2 / 5;
	padding-right: 34px;
	text-align: right;
	font-size: 42px;
	font-weight: normal;
	line-height: 48px;
}
.intro{
	grid-area: 2 / 1 / 3 / 3;
	padding-left: 34px;
	white-space: nowrap;
}
.orange{
	grid-area: 2 / 3 / 3 / 5;
	background-color: #c98220;
}
.orange.side{
	grid-area: 3 / 4 / 4 / 5;
}
.red{
	grid-area: 3 / 1 / 4 / 2;
	margin-top: 5px;
	background-color: #9c382a;
}
.house{
	grid-area: 3 / 2 / 5 / 4;
	width: 100%;
	height: 100%;
}
.green{
	grid-area: 5 / 2 / 6 / 4;
	margin: 0 2px 0 3px;
	background-color: #419843;
}
.sheet footer{
	grid-area: 6 / 1 / 7 / 5;
	padding-top: 21px;
	text-align: center;
}
.docbar{
	flex: none;
	width: 16px;
}
.docbar .split{
	height: 8px;
	background-color: #e4e4e4;
	border-bottom: 1px solid #777777;
}

/* taskbar */
.taskbar{
	flex: none;
	height: 30px;
	padding: 0 3px 2px 2px;
	display: flex;
	align-items: center;
	gap: 4px;
	background-color: #d4d0c8;
	border-top: 1px solid white;
}
.taskbar svg{
	width: 16px;
	height: 16px;
}
.start, .app{
	height: 23px;
	gap: 3px;
	border: 1px solid;
	border-color: white #404040 #404040 white;
}
.start{
	width: 52px;
	gap: 1px;
}
.app{
	width: 160px;
	padding: 0 0 0 4px;
	justify-content: flex-start;
}
.app span{
	white-space: nowrap;
}
.help{
	width: 11px;
	height: 13px;
	background-color: #fffff0;
	border: 1px solid black;
	font-weight: bold;
}
.tray{
	height: 23px;
	padding: 0 11px 0 5px;
	display: flex;
	align-items: center;
	gap: 2px;
	border: 1px solid;
	border-color: #808080 white white #808080;
}
.more{
	font-size: 14px;
	font-weight: bold;
	margin-right: 3px;
}
.tray time{
	margin-left: 6px;
}
```
